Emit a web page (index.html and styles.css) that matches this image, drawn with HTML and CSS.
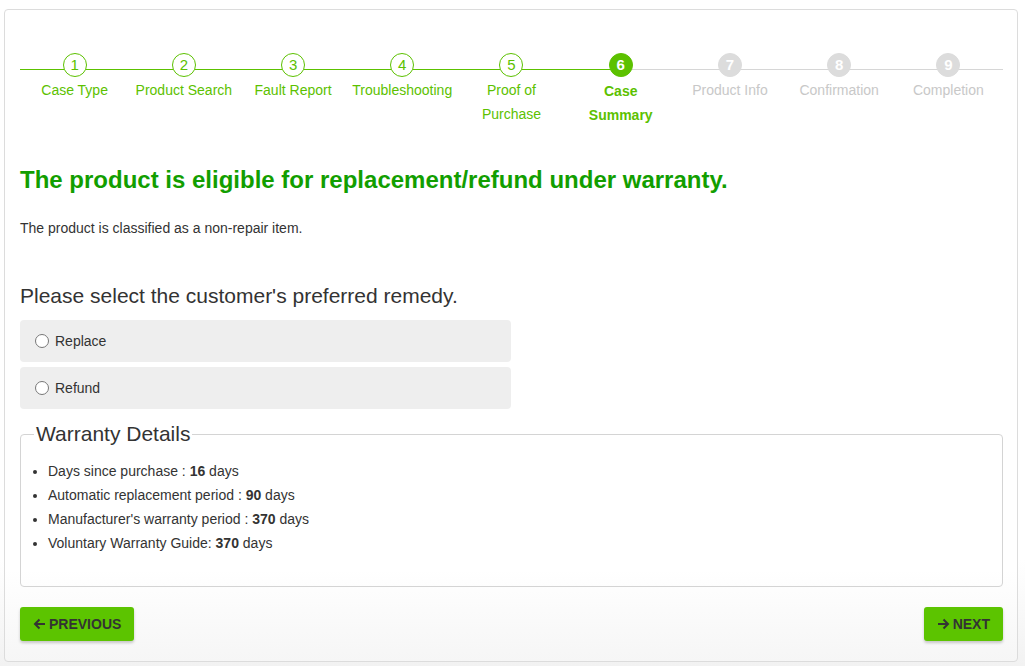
FILE: index.html
```html
<!DOCTYPE html>
<html lang="en">
<head>
<meta charset="utf-8">
<title>Case Summary</title>
<link rel="stylesheet" href="styles.css">
</head>
<body>
<div class="card">
  <ol class="steps">
    <li class="step done"><span class="num">1</span><span class="label">Case Type</span></li>
    <li class="step done"><span class="num">2</span><span class="label">Product Search</span></li>
    <li class="step done"><span class="num">3</span><span class="label">Fault Report</span></li>
    <li class="step done"><span class="num">4</span><span class="label">Troubleshooting</span></li>
    <li class="step done"><span class="num">5</span><span class="label">Proof of<br>Purchase</span></li>
    <li class="step active"><span class="num">6</span><span class="label">Case<br>Summary</span></li>
    <li class="step todo"><span class="num">7</span><span class="label">Product Info</span></li>
    <li class="step todo"><span class="num">8</span><span class="label">Confirmation</span></li>
    <li class="step todo"><span class="num">9</span><span class="label">Completion</span></li>
  </ol>

  <h2 class="headline">The product is eligible for replacement/refund under warranty.</h2>
  <p class="note">The product is classified as a non-repair item.</p>

  <h3 class="question">Please select the customer's preferred remedy.</h3>
  <div class="options">
    <label class="option"><input type="radio" name="remedy" class="radio"><span>Replace</span></label>
    <label class="option"><input type="radio" name="remedy" class="radio"><span>Refund</span></label>
  </div>

  <fieldset class="details">
    <legend>Warranty Details</legend>
    <ul class="detail-list">
      <li>Days since purchase : <b>16</b> days</li>
      <li>Automatic replacement period : <b>90</b> days</li>
      <li>Manufacturer's warranty period : <b>370</b> days</li>
      <li>Voluntary Warranty Guide: <b>370</b> days</li>
    </ul>
  </fieldset>

  <div class="actions">
    <button class="btn" type="button">
      <svg class="arrow" width="13" height="12" viewBox="0 0 13 12"><path d="M12 6H2M6.5 1.5L2 6l4.5 4.5" fill="none" stroke="#333" stroke-width="2"/></svg>
      PREVIOUS
    </button>
    <button class="btn" type="button">
      <svg class="arrow" width="13" height="12" viewBox="0 0 13 12"><path d="M1 6h10M6.5 1.5L11 6l-4.5 4.5" fill="none" stroke="#333" stroke-width="2"/></svg>
      NEXT
    </button>
  </div>
</div>
</body>
</html>
```

FILE: styles.css
```css
html, body {
  margin: 0;
  padding: 0;
}
body {
  background: linear-gradient(#ffffff 0, #ffffff 560px, #f2f2f2 666px);
  font-family: "Liberation Sans", Arial, Helvetica, sans-serif;
  color: #333;
  padding: 9px 7px 0 4px;
  height: 666px;
  box-sizing: border-box;
}
.card {
  border: 1px solid #dcdcdc;
  border-radius: 4px;
  background: linear-gradient(#ffffff 0, #ffffff 560px, #f6f6f6 100%);
  height: 653px;
  box-sizing: border-box;
  padding: 43px 14px 0 15px;
}

/* Steps */
.steps {
  list-style: none;
  margin: 0;
  padding: 0;
  display: grid;
  grid-template-columns: repeat(9, 1fr);
  height: 114px;
}
.step {
  position: relative;
  display: flex;
  flex-direction: column;
  align-items: center;
  font-size: 14px;
}
.step::before {
  content: "";
  position: absolute;
  left: 0;
  right: 0;
  top: 16px;
  height: 1px;
  background: #5cc100;
}
.step.active::before {
  background: linear-gradient(to right, #5cc100 50%, #d6d6d6 50%);
}
.step.todo::before {
  background: #d6d6d6;
}
.num {
  position: relative;
  width: 24px;
  height: 24px;
  box-sizing: border-box;
  border-radius: 50%;
  border: 1px solid #5cc100;
  background: #fff;
  color: #5cc100;
  font-size: 15px;
  line-height: 22px;
  text-align: center;
}
.label {
  line-height: 24px;
  margin-top: 1px;
  text-align: center;
  color: #5cc100;
  white-space: nowrap;
}
.step.active .num {
  background: #5cc100;
  color: #fff;
  font-weight: bold;
}
.step.active .label {
  font-weight: bold;
  margin-top: 2px;
}
.step.todo .num {
  background: #dcdcdc;
  border-color: #dcdcdc;
  color: #fff;
  font-weight: bold;
}
.step.todo .label {
  color: #c8c8c8;
}

/* Headline */
.headline {
  margin: 0;
  font-size: 24px;
  line-height: 26px;
  font-weight: bold;
  color: #129e00;
}
.note {
  margin: 27px 0 0;
  font-size: 14px;
  line-height: 16px;
}
.question {
  margin: 48px 0 0;
  font-size: 21px;
  font-weight: normal;
  line-height: 24px;
  color: #333;
}
.options {
  margin-top: 12px;
  width: 491px;
  display: flex;
  flex-direction: column;
  gap: 5px;
}
.option {
  display: flex;
  align-items: center;
  height: 42px;
  background: #eeeeee;
  border-radius: 4px;
  padding-left: 15px;
  font-size: 14px;
  box-sizing: border-box;
}
.radio {
  margin: 0 6px 0 0;
  width: 14px;
  height: 14px;
}

/* Fieldset */
.details {
  margin: 13px 0 0;
  padding: 0 0 31px;
  border: 1px solid #d4d4d4;
  border-radius: 4px;
  min-width: 0;
}
.details legend {
  margin-left: 13px;
  padding: 0 2px;
  font-size: 21px;
  line-height: 24px;
  color: #333;
}
.detail-list {
  margin: 13px 0 0;
  padding: 0 0 0 27px;
  font-size: 14px;
  line-height: 24px;
}

/* Buttons */
.actions {
  margin-top: 20px;
  display: flex;
  justify-content: space-between;
}
.btn {
  display: flex;
  align-items: center;
  gap: 3px;
  height: 34px;
  padding: 0 13px;
  border: none;
  border-radius: 3px;
  background: #5cc400;
  color: #333;
  font-family: "Liberation Sans", Arial, Helvetica, sans-serif;
  font-size: 14px;
  font-weight: bold;
  box-shadow: 0 2px 3px rgba(0, 0, 0, 0.2);
}
.arrow {
  display: block;
}
```
